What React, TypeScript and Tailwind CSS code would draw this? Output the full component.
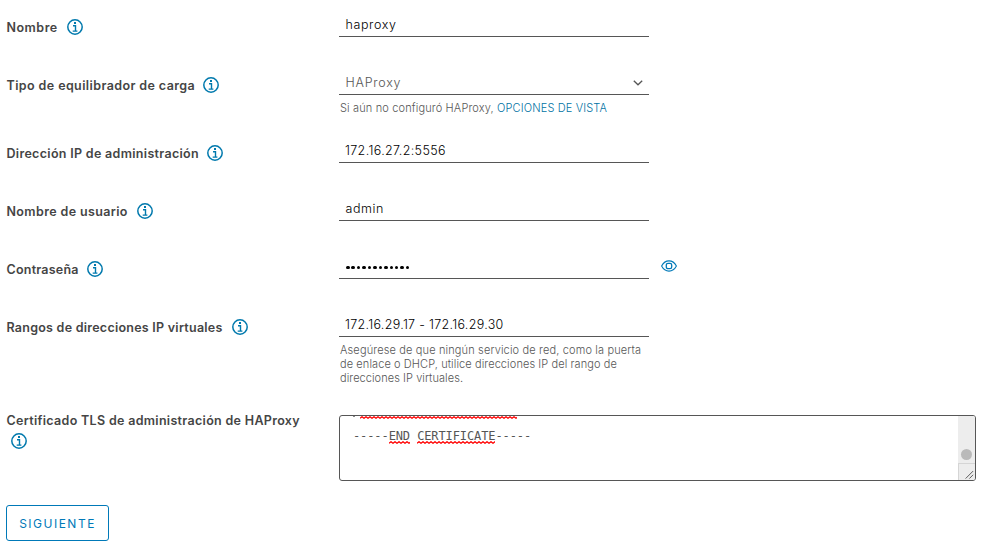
import type { ReactNode } from "react";

const InfoIcon = () => (
  <svg width="16" height="16" viewBox="0 0 16 16" fill="none" stroke="#0079ad" className="block shrink-0">
    <circle cx="8" cy="8" r="7.2" strokeWidth="1.5" />
    <path d="M6 6.700h2.500v5.300M5.700 12.100h4.700" strokeWidth="1.400" />
    <path d="M7 4h2" strokeWidth="2" />
  </svg>
);

const EyeIcon = () => (
  <svg width="16" height="12" viewBox="0 0 16 12" fill="none" stroke="#0079b8" className="block">
    <path d="M.6 6C2.4 2.6 5 .9 8 .9S13.600 2.600 15.400 6C13.600 9.400 11 11.100 8 11.100S2.400 9.400.6 6Z" strokeWidth="1.100" />
    <rect x="5.300" y="3.300" width="5.400" height="5.400" rx="1.700" strokeWidth="1.300" />
  </svg>
);

function Label({ text, className }: { text: string; className: string }) {
  return (
    <div className="flex w-[333px] shrink-0 items-start gap-2 pt-1.5">
      <span className={`block h-4 whitespace-nowrap pl-[0.5px] pt-px text-[12.5px] font-semibold leading-4 text-[#454545] ${className}`}>
        {text}
      </span>
      <InfoIcon />
    </div>
  );
}

function Field({ children }: { children: ReactNode }) {
  return (
    <div className="flex h-6 w-[310px] items-center justify-between whitespace-nowrap border-b border-[#565656] px-1.5 pt-px text-[12.5px] font-light leading-4">
      {children}
    </div>
  );
}

function Misspelled({ children }: { children: string }) {
  const width = children.length * 7.1;
  return (
    <span className="relative inline-block">
      {children}
      <Squiggle width={width} className="absolute left-0 top-[13px]" />
    </span>
  );
}

function Squiggle({ width, className }: { width: number; className: string }) {
  return (
    <svg width={width} height="3" fill="none" stroke="#f00" strokeWidth="1.2" className={className}>
      <path d={"M0 2.300" + "l2-1.600 2 1.600".repeat(Math.ceil(width / 4))} />
    </svg>
  );
}

export default function App() {
  return (
    <form className="h-[549px] w-[984px] overflow-hidden bg-white pl-1.5 pt-[13px] font-['Inter',sans-serif] text-black">
      <div className="flex h-[58px]">
        <Label text="Nombre" className="w-[53px] tracking-[0.5px]" />
        <Field><span className="pl-[0.5px] tracking-[0.6px]">haproxy</span></Field>
      </div>
      <div className="flex h-[68px]">
        <Label text="Tipo de equilibrador de carga" className="w-[189px] tracking-[0.4px]" />
        <div>
          <Field>
            <span className="pl-[0.5px] tracking-[0.75px] text-[#565656]">HAProxy</span>
            <svg width="10" height="6" viewBox="0 0 10 6" fill="none" stroke="#565656" strokeWidth="1.3">
              <path d="M.8.8 5 4.800 9.200.8" />
            </svg>
          </Field>
          <p className="whitespace-nowrap pl-px pt-1.5 text-[11px] font-light leading-[14px] tracking-[0.14px] text-[#565656]">
            Si aún no configuró HAProxy, <span className="text-[#0072a3]">OPCIONES DE VISTA</span>
          </p>
        </div>
      </div>
      <div className="flex h-[58px]">
        <Label text="Dirección IP de administración" className="w-[193px] tracking-[0.31px]" />
        <Field><span className="tracking-[0.35px]">172.16.27.2:5556</span></Field>
      </div>
      <div className="flex h-[58px]">
        <Label text="Nombre de usuario" className="w-[123px] tracking-[0.37px]" />
        <Field><span className="pl-[0.5px] tracking-[0.6px]">admin</span></Field>
      </div>
      <div className="flex h-[58px]">
        <Label text="Contraseña" className="w-[73px] tracking-[0.22px]" />
        <Field>
          <span className="flex gap-[1.95px] pl-px pt-px">
            {Array.from({ length: 12 }, (_, i) => (
              <i key={i} className="block size-[3.5px] rounded-full bg-black" />
            ))}
          </span>
        </Field>
        <div className="pl-3 pt-[5px]"><EyeIcon /></div>
      </div>
      <div className="flex h-[102px]">
        <Label text="Rangos de direcciones IP virtuales" className="w-[218px] tracking-[0.25px]" />
        <div>
          <Field><span className="tracking-[0.3px]">172.16.29.17 - 172.16.29.30</span></Field>
          <p className="whitespace-nowrap pl-px pt-1.5 text-[11px] font-light leading-[14px] tracking-[0.14px] text-[#565656]">
            <span className="block">Asegúrese de que ningún servicio de red, como la puerta</span>
            <span className="block tracking-[0.09px]">de enlace o DHCP, utilice direcciones IP del rango de</span>
            <span className="block tracking-[0.06px]">direcciones IP virtuales.</span>
          </p>
        </div>
      </div>
      <div className="flex h-[90px]">
        <div className="w-[333px] shrink-0 text-[12.5px] font-semibold leading-[11px] tracking-[0.31px] text-[#454545]">
          <span className="block h-[18px] whitespace-nowrap pl-[0.5px]">Certificado TLS de administración de HAProxy</span>
          <span className="block pl-[5px]"><InfoIcon /></span>
        </div>
        <div className="flex h-[66px] w-[637px] justify-between overflow-hidden rounded-[3px] border border-[#565656]">
          <div className="flex flex-col pl-[13px] font-['DejaVu_Sans_Mono',monospace] text-[12px] tracking-[-0.1px] text-[#565656]">
            <div className="flex h-[3px] overflow-hidden">
              <span className="mr-[5px] h-px w-0.5 bg-[#8a8a8a]" />
              <Squiggle width={157} className="block" />
            </div>
            <span className="whitespace-pre pt-[9px] leading-4">
              -----<Misspelled>END</Misspelled> <Misspelled>CERTIFICATE</Misspelled>-----
            </span>
          </div>
          <div className="flex w-[17px] flex-col bg-[#ededed]">
            <div className="flex h-12 items-end justify-center border-b border-[#d5d5d5] pb-[3px]">
              <span className="size-[11px] rounded-full bg-[#bababa]" />
            </div>
            <svg width="17" height="16" viewBox="0 0 17 16" stroke="#555" className="border-l border-[#d5d5d5]">
              <path d="m7 15 8-8M11 15l4-4" />
            </svg>
          </div>
        </div>
      </div>
      <button type="button" className="flex h-9 w-[103px] items-center justify-center rounded-[3px] border border-[#0079b8] pt-px text-[12px] leading-4 tracking-[1.5px] text-[#0079b8]">
        SIGUIENTE
      </button>
    </form>
  );
}
